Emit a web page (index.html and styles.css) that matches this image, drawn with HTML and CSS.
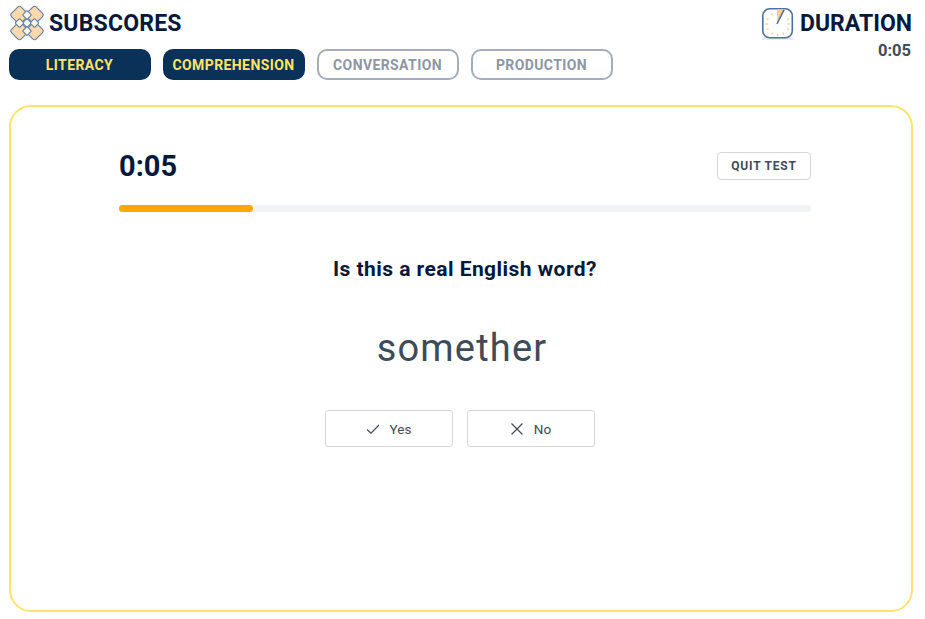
FILE: index.html
```html
<!DOCTYPE html>
<html lang="en">
<head>
  <meta charset="UTF-8">
  <title>Subscores</title>
  <link rel="stylesheet" href="styles.css">
</head>
<body>
  <header class="top">
    <div class="scores">
      <div class="heading">
        <svg class="logo" width="36" height="36" viewBox="0 0 36 36">
          <g stroke="#5f7ea6" stroke-width="1.1">
            <rect x="-6.8" y="-6.8" width="13.6" height="13.6" rx="2.5" fill="#fbd9ab" transform="translate(10.5 10) rotate(45)"/>
            <rect x="-6.8" y="-6.8" width="13.6" height="13.6" rx="2.5" fill="#fbd9ab" transform="translate(25.5 10) rotate(45)"/>
            <rect x="-6.8" y="-6.8" width="13.6" height="13.6" rx="2.5" fill="#fbd9ab" transform="translate(10.5 26) rotate(45)"/>
            <rect x="-6.8" y="-6.8" width="13.6" height="13.6" rx="2.5" fill="#fbd9ab" transform="translate(25.5 26) rotate(45)"/>
            <rect x="-3.2" y="-3.2" width="6.4" height="6.4" rx="1" fill="#fff6e8" transform="translate(18 18) rotate(45)"/>
            <rect x="-3.2" y="-3.2" width="6.4" height="6.4" rx="1" fill="#fff6e8" transform="translate(18 10) rotate(45)"/>
            <rect x="-3.2" y="-3.2" width="6.4" height="6.4" rx="1" fill="#fff6e8" transform="translate(18 26) rotate(45)"/>
            <rect x="-3.2" y="-3.2" width="6.4" height="6.4" rx="1" fill="#fff6e8" transform="translate(10.5 18) rotate(45)"/>
            <rect x="-3.2" y="-3.2" width="6.4" height="6.4" rx="1" fill="#fff6e8" transform="translate(25.5 18) rotate(45)"/>
          </g>
        </svg>
        <h1>SUBSCORES</h1>
      </div>
      <div class="pills">
        <span class="pill on">LITERACY</span>
        <span class="pill on">COMPREHENSION</span>
        <span class="pill">CONVERSATION</span>
        <span class="pill">PRODUCTION</span>
      </div>
    </div>
    <div class="duration">
      <div class="heading">
        <svg class="clock" width="32" height="33" viewBox="0 0 32 33">
          <rect x="0" y="30" width="31" height="3" fill="#e6ebf1"/>
          <rect x="0.8" y="1.8" width="29.5" height="29" rx="7" fill="#fff" stroke="#4f6f9c" stroke-width="1.6"/>
          <path d="M15 17 L15 2.6 L22 2.6 Z" fill="#fbcf94"/>
          <path d="M15 17 L22 2.8" stroke="#4f6f9c" stroke-width="1.5" fill="none"/>
          <path d="M9.5 6.5l1.2 2M4.5 11.5l2 1.2M3.5 17h2.5M4.5 22.5l2-1.2M9.5 27.5l1.2-2M15.5 29v-2.5M22 27.5l-1.2-2M27 22.5l-2-1.2M28 17h-2.5M27 11.5l-2 1.2" stroke="#fbcf94" stroke-width="1.4" fill="none"/>
        </svg>
        <h2>DURATION</h2>
      </div>
      <div class="elapsed">0:05</div>
    </div>
  </header>

  <main class="card">
    <div class="test">
      <div class="test-head">
        <div class="timer">0:05</div>
        <button class="quit">QUIT TEST</button>
      </div>
      <div class="progress"><div class="progress-fill" style="width: 19.4%"></div></div>
      <p class="question">Is this a real English word?</p>
      <p class="word">somether</p>
      <div class="answers">
        <button class="answer">
          <svg width="16" height="16" viewBox="0 0 16 16"><path d="M2 8.5 L6 12.2 L14 4" fill="none" stroke="#3e4c59" stroke-width="1.2"/></svg>
          Yes
        </button>
        <button class="answer">
          <svg width="16" height="16" viewBox="0 0 16 16"><path d="M2.5 2.5 L13.5 13.5 M13.5 2.5 L2.5 13.5" fill="none" stroke="#3e4c59" stroke-width="1.2"/></svg>
          No
        </button>
      </div>
    </div>
  </main>
</body>
</html>
```

FILE: styles.css
```css
* {
  box-sizing: border-box;
}
body {
  margin: 0;
  height: 619px;
  padding: 6px 12px 8px 9px;
  font-family: Roboto, sans-serif;
  background: #fff;
  color: #04193c;
  overflow: hidden;
}
.top {
  display: flex;
  justify-content: space-between;
  align-items: flex-start;
  padding-right: 1px;
}
.heading {
  display: flex;
  align-items: center;
  height: 34px;
}
h1, h2 {
  margin: 0;
  font-size: 23px;
  font-weight: 700;
}
h1 {
  letter-spacing: 0.2px;
}
.logo {
  margin-right: 4px;
}
.clock {
  margin-right: 6px;
}
.pills {
  display: flex;
  gap: 12px;
  margin-top: 9px;
}
.pill {
  width: 142px;
  height: 31px;
  display: grid;
  place-content: center;
  padding-right: 1px;
  border: 2px solid #a3adbb;
  border-radius: 10px;
  font-size: 14px;
  font-weight: 700;
  letter-spacing: 0.4px;
  color: #8d96a3;
}
.pill.on {
  background: #0a3157;
  border-color: #0a3157;
  color: #fde567;
}
.duration {
  display: flex;
  flex-direction: column;
  align-items: flex-end;
}
.elapsed {
  margin-top: 1px;
  padding-right: 1px;
  font-size: 16.5px;
  font-weight: 700;
  color: #3e4c59;
}
.card {
  margin: 25px 0 0;
  height: 507px;
  padding: 0 100px 0 108px;
  border: 2px solid #fde26f;
  border-radius: 22px;
}
.test-head {
  display: flex;
  justify-content: space-between;
  align-items: center;
  margin-top: 42px;
}
.timer {
  font-size: 29px;
  font-weight: 700;
  color: #04193c;
}
.quit {
  width: 94px;
  height: 28px;
  padding: 0;
  font: 700 12px Roboto, sans-serif;
  letter-spacing: 0.8px;
  color: #3e4c59;
  background: #fff;
  border: 1px solid #d3d7dc;
  border-radius: 4px;
}
.progress {
  height: 7px;
  margin-top: 22px;
  background: #f1f3f5;
  border-radius: 4px;
}
.progress-fill {
  height: 100%;
  background: #ffa900;
  border-radius: 4px;
}
.question {
  margin: 45px 0 0;
  text-align: center;
  font-size: 21px;
  font-weight: 700;
  line-height: 24px;
  letter-spacing: 0.45px;
}
.word {
  margin: 44px 0 0;
  padding-right: 6px;
  text-align: center;
  font-size: 38px;
  line-height: 46px;
  letter-spacing: 1.2px;
  color: #3e4c59;
}
.answers {
  display: flex;
  justify-content: center;
  gap: 14px;
  margin-top: 39px;
  padding-right: 10px;
}
.answer {
  width: 128px;
  height: 37px;
  display: flex;
  align-items: center;
  justify-content: center;
  gap: 9px;
  padding: 0 2px 0 0;
  font: 400 13.5px Roboto, sans-serif;
  color: #3e4c59;
  background: #fff;
  border: 1px solid #d3d7dc;
  border-radius: 3px;
}
```
